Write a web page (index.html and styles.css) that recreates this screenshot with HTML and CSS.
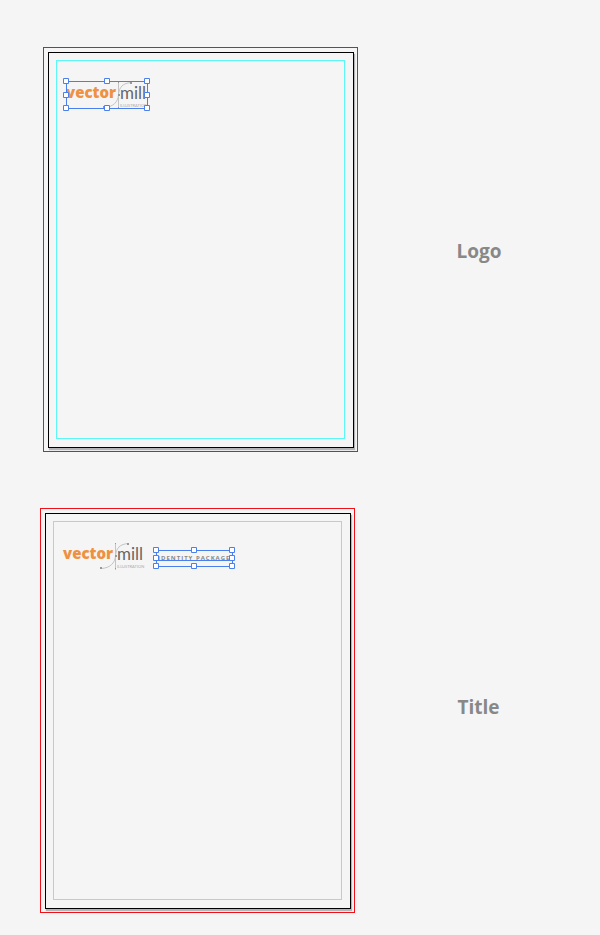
FILE: index.html
```
<!DOCTYPE html>
<html lang="en">
<head>
    <meta charset="UTF-8">
    <meta name="viewport" content="width=device-width, initial-scale=1.0">
    <title>Vector Mill Identity Package</title>
    <link rel="stylesheet" href="styles.css">
</head>
<body>

<main class="steps">
    <section class="step step-logo">
        <div class="bleed">
            <div class="page">
                <div class="margin">
                    <div class="logo">
                        <svg class="logo-curve" viewBox="0 0 82 28">
                            <path d="M52.5 1V28M38.5 26.5C47 26 52 21 52.5 14C53 6 57 2 65.5 1.5"/>
                            <path class="node" d="M37 25h2v2h-2zM64 1h2v2h-2zM52 1h1v1h-1zM52 26h1v1h-1zM52 13h2v2h-2z"/>
                        </svg>
                        <span class="vector">vector</span>
                        <span class="mill">mill</span>
                        <span class="tag">ILLUSTRATION</span>
                        <svg class="handles" viewBox="0 0 88 34">
                            <path class="outline" d="M3.5 3.5h81v27h-81z"/>
                            <path d="M.5 .5h5v5h-5zM41.5 .5h5v5h-5zM81.5 .5h5v5h-5zM.5 14.5h5v5h-5zM81.5 14.5h5v5h-5zM.5 27.5h5v5h-5zM41.5 27.5h5v5h-5zM81.5 27.5h5v5h-5z"/>
                        </svg>
                    </div>
                </div>
            </div>
        </div>
        <h2>Logo</h2>
    </section>

    <section class="step step-title">
        <div class="bleed">
            <div class="page">
                <div class="margin">
                    <div class="logo">
                        <svg class="logo-curve" viewBox="0 0 82 28">
                            <path d="M52.5 1V28M38.5 26.5C47 26 52 21 52.5 14C53 6 57 2 65.5 1.5"/>
                            <path class="node" d="M37 25h2v2h-2zM64 1h2v2h-2zM52 1h1v1h-1zM52 26h1v1h-1zM52 13h2v2h-2z"/>
                        </svg>
                        <span class="vector">vector</span>
                        <span class="mill">mill</span>
                        <span class="tag">ILLUSTRATION</span>
                    </div>
                    <div class="title">
                        <span>IDENTITY PACKAGE</span>
                        <svg class="handles" viewBox="0 0 83 23">
                            <path class="outline" d="M3.5 3.5h76v16h-76zM3.5 13.5h76"/>
                            <path d="M.5 .5h5v5h-5zM38.5 .5h5v5h-5zM76.5 .5h5v5h-5zM.5 8.5h5v5h-5zM76.5 8.5h5v5h-5zM.5 16.5h5v5h-5zM38.5 16.5h5v5h-5zM76.5 16.5h5v5h-5z"/>
                        </svg>
                    </div>
                </div>
            </div>
        </div>
        <h2>Title</h2>
    </section>
</main>

</body>
</html>
```
FILE: styles.css
```
* {
    box-sizing: border-box;
}
body {
    margin: 0;
    font-family: "Open Sans", sans-serif;
    background-color: #f5f5f5;
}
.steps {
    display: grid;
    gap: 56px;
    padding: 47px 0 22px;
}
.step {
    display: grid;
    grid-template-columns: minmax(0, 315px) 1fr;
    align-items: center;
}
.step-logo {
    padding-left: 43px;
}
.step-title {
    padding-left: 40px;
}
.step h2 {
    margin: 0;
    padding-top: 2px;
    font-size: 19px;
    line-height: 28px;
    text-align: center;
    color: #888888;
}
.step-title h2 {
    padding: 0 0 8px 2px;
}

/* Bleed, trim and margin guides */
.bleed {
    display: grid;
    aspect-ratio: 315 / 405;
    padding: 4px 3px 3px 4px;
    border: 1px solid #f01018;
}
.page {
    display: grid;
    padding: 7px 8px 8px 7px;
    border: 1px solid #000000;
    box-shadow: 1px 2px 1px #b4b4b8;
}
.margin {
    display: flex;
    align-items: center;
    align-content: flex-start;
    flex-wrap: wrap;
    gap: 11px;
    padding: 20px 9px;
    border: 1px solid #5cf8f8;
}

/* Logo */
.logo {
    position: relative;
    display: grid;
    grid-template-columns: 54px 28px;
    grid-template-rows: 22px 6px;
    width: 82px;
    line-height: 23px;
    white-space: nowrap;
}
.logo-curve {
    position: absolute;
    width: 82px;
    height: 28px;
    fill: none;
    stroke: #c4c4c4;
}
.logo-curve .node {
    fill: #999999;
    stroke: none;
}
.vector {
    font-size: 15px;
    font-weight: 800;
    color: #ee9140;
}
.mill {
    font-family: Lato, sans-serif;
    font-size: 17px;
    color: #666666;
}
.tag {
    grid-column: 2;
    font-family: Lato, sans-serif;
    font-size: 4px;
    line-height: 5px;
    color: #aaaaaa;
}
.title {
    position: relative;
    width: 77px;
    height: 17px;
    margin-top: 4px;
    padding-left: 2px;
    font-size: 6px;
    font-weight: bold;
    line-height: 16px;
    letter-spacing: 1px;
    white-space: nowrap;
    color: #888888;
}

/* Selection box with its drag handles */
.handles {
    position: absolute;
    top: -3px;
    left: -3px;
    fill: #ffffff;
    stroke: #4a80ee;
}
.handles .outline {
    fill: none;
}
.logo .handles {
    width: 88px;
    height: 34px;
}
.title .handles {
    width: 83px;
    height: 23px;
}
```
